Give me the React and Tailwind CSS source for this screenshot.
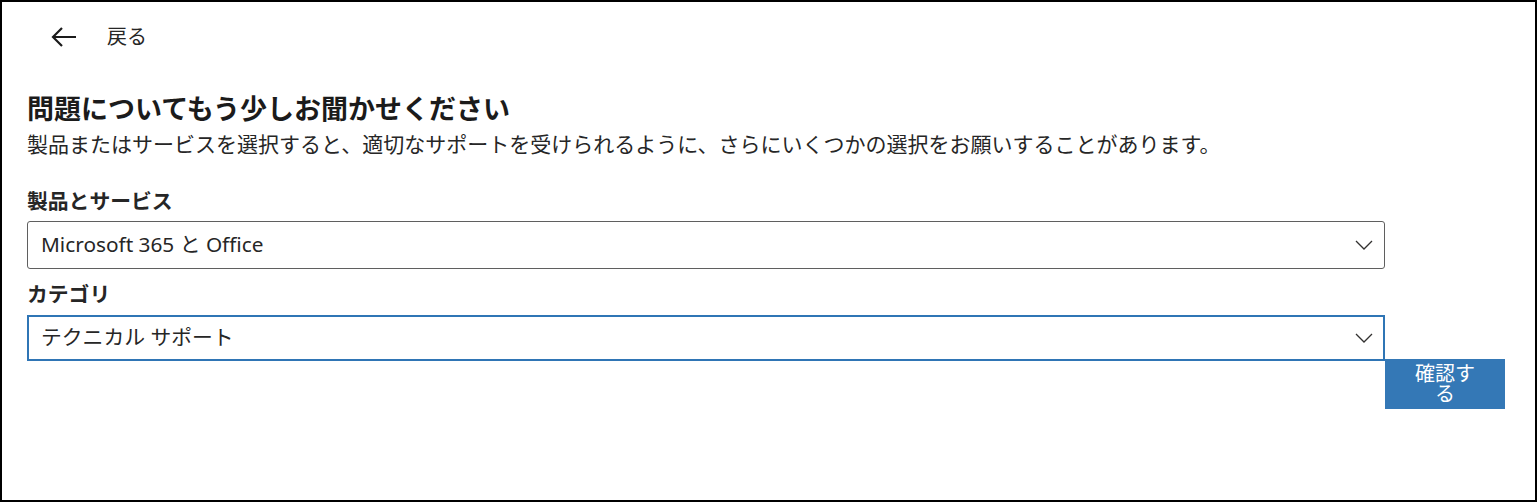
import React, { useState } from 'react';

const FONT = { fontFamily: '"Noto Sans", "Noto Sans CJK JP", sans-serif' };

const Chevron = () => (
  <svg width="18" height="10" viewBox="0 0 18 10" fill="none">
    <path d="M1 1 L9 9 L17 1" stroke="#323130" strokeWidth="1.3" />
  </svg>
);

const SelectBox = ({ value, focused }) => (
  <div
    className={`w-[1358px] flex items-center justify-between text-[20.8px] text-[#262626] ${
      focused
        ? 'h-[46px] border-2 border-[#2f75b5] pl-[12px] pr-[10px]'
        : 'h-[48px] border border-[#5f5f5f] rounded-[3px] pl-[13px] pr-[11px]'
    }`}
  >
    <span>{value}</span>
    <Chevron />
  </div>
);

const App = () => {
  const [product] = useState('Microsoft 365 と Office');
  const [category] = useState('テクニカル サポート');

  return (
    <div style={FONT} className="w-[1537px] h-[502px] border-2 border-black bg-white text-[#262626]">
      <div className="flex items-center h-[46px] mt-[12px] pl-[49px]">
        <svg width="26" height="22" viewBox="0 0 26 22" fill="none">
          <path d="M25 11 H2.5 M11 2 L2 11 L11 20" stroke="#1b1b1b" strokeWidth="2.2" />
        </svg>
        <span className="ml-[30px] text-[20px]">戻る</span>
      </div>

      <div className="pl-[25px] mt-[31px]">
        <h1 className="text-[27px] leading-[36px] font-bold text-[#1b1b1b]">
          問題についてもう少しお聞かせください
        </h1>
        <p className="text-[21px] leading-[34px]">
          製品またはサービスを選択すると、適切なサポートを受けられるように、さらにいくつかの選択をお願いすることがあります。
        </p>

        <label className="block mt-[25px] text-[20.8px] leading-[30px] font-bold">製品とサービス</label>
        <div className="mt-[5px]">
          <SelectBox value={product} />
        </div>

        <label className="block mt-[10px] text-[20.8px] leading-[30px] font-bold">カテゴリ</label>
        <div className="mt-[6px]">
          <SelectBox value={category} focused />
        </div>

        <div className="w-[1478px] flex justify-end -mt-[2px]">
          <button className="w-[120px] h-[50px] bg-[#3478b6] text-white text-[20px] leading-[20px] px-[24px] text-center">
            確認する
          </button>
        </div>
      </div>
    </div>
  );
};

export default App;
